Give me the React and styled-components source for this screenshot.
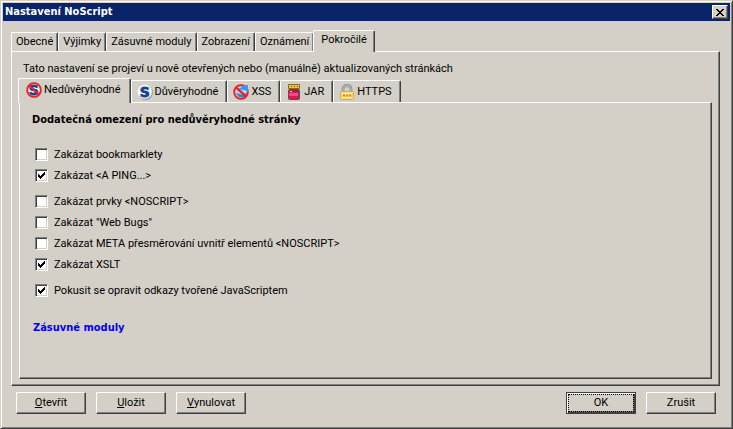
import { useState } from "react";
import styled, { createGlobalStyle, css } from "styled-components";

const GlobalStyle = createGlobalStyle`
  body {
    margin: 0;
    background: #d4d0c8;
    color: #000;
    font-family: Roboto, "DejaVu Sans Condensed", sans-serif;
    font-size: 11px;
    line-height: 14px;
  }

  button, input {
    font: inherit;
    color: inherit;
  }
`;

const boldFont = css`
  font-family: "DejaVu Sans Condensed", "DejaVu Sans", sans-serif;
  font-size: 11px;
  font-weight: bold;
`;

const raised = css`
  border: 1px solid;
  border-color: #fff #404040 #404040 #fff;
  box-shadow: inset -1px -1px #808080;
`;

const Dialog = styled.main`
  box-sizing: border-box;
  display: flex;
  flex-direction: column;
  min-height: 100vh;
  padding: 1px;
  border: 1px solid;
  border-color: #d4d0c8 #404040 #404040 #d4d0c8;
  box-shadow: inset 1px 1px #fff, inset -1px -1px #808080;
`;

const TitleBar = styled.header`
  display: flex;
  align-items: center;
  justify-content: space-between;
  height: 18px;
  margin: 1px 1px 0 1px;
  padding: 0 2px;
  background: #0a246a;
  color: #fff;
`;

const Title = styled.h1`
  ${boldFont}
  margin: 0;
`;

const CloseButton = styled.button`
  ${raised}
  display: flex;
  align-items: center;
  justify-content: center;
  width: 16px;
  height: 14px;
  padding: 0;
  background: #d4d0c8;
`;

const Body = styled.div`
  display: flex;
  flex: 1;
  flex-direction: column;
  padding: 9px 11px 13px 9px;
`;

const TabList = styled.div`
  display: flex;
  align-items: flex-end;
`;

const Tab = styled.button`
  display: flex;
  align-items: center;
  gap: 2px;
  height: ${props => props.$tall ? "22px" : "19px"};
  padding: ${props => props.$tall ? "0 8px 0 5px" : "0 4px"};
  border: solid #fff;
  border-width: 1px 1px 0 1px;
  border-right-color: #404040;
  border-radius: 2px 2px 0 0;
  box-shadow: inset -1px 0 #808080;
  background: #d4d0c8;
  white-space: nowrap;

  ${props => props.$active && css`
    position: relative;
    z-index: 1;
    height: ${props.$tall ? "25px" : "22px"};
    margin: 0 0 -1px -1px;
    padding: 0 ${props.$tall ? "9px" : "7px"} 3px 7px;
  `}
`;

const Panel = styled.section`
  ${raised}
  display: flex;
  flex: 1;
  flex-direction: column;
  padding: ${props => props.$inner ? "9px 12px" : "10px 7px 6px"};
`;

const Note = styled.p`
  margin: 0 0 2px 4px;
`;

const Heading = styled.h2`
  ${boldFont}
  margin: 0 0 18px;
  line-height: 16px;
`;

const Options = styled.div`
  display: flex;
  flex-direction: column;
  gap: 12px;
  padding-left: 3px;
`;

const OptionGroup = styled.div`
  display: flex;
  flex-direction: column;
  align-items: flex-start;
  gap: 7px;
`;

const Option = styled.label`
  display: grid;
  grid-template-columns: 13px auto;
  align-items: center;
  column-gap: 6px;
  height: 14px;

  svg {
    display: none;
    grid-area: 1 / 1;
    justify-self: center;
    pointer-events: none;
  }

  input:checked + svg {
    display: block;
  }
`;

const OptionText = styled.span`
  padding-top: 2px;
`;

const CheckBox = styled.input`
  appearance: none;
  grid-area: 1 / 1;
  box-sizing: border-box;
  width: 13px;
  height: 13px;
  margin: 0;
  border: 1px solid;
  border-color: #808080 #fff #fff #808080;
  box-shadow: inset 1px 1px #404040, inset -1px -1px #d4d0c8;
  background: #fff;
`;

const PluginsLink = styled.a`
  ${boldFont}
  align-self: flex-start;
  margin: 25px 0 0 1px;
  color: #00f;
  text-decoration: none;
`;

const Footer = styled.footer`
  display: flex;
  gap: 10px;
  padding: 6px 4px 0 5px;
`;

const Spacer = styled.div`
  flex: 1;
`;

const PushButton = styled.button`
  ${raised}
  box-sizing: border-box;
  width: 70px;
  height: 22px;
  padding: 0;
  background: #d4d0c8;

  ${props => props.$default && css`
    border-color: #404040;
    box-shadow: inset 1px 1px #fff, inset -1px -1px #404040, inset -2px -2px #808080;
    outline: 1px dotted #000;
    outline-offset: -3px;
  `}
`;

function CheckMark() {
  return (
    <svg width="7" height="7" shapeRendering="crispEdges" aria-hidden="true">
      <path d="M0 2h1v1h1v1h1v-1h1v-1h1v-1h1v-1h1v3h-1v1h-1v1h-1v1h-1v1h-1v-1h-1v-1h-1z" />
    </svg>
  );
}

function CloseIcon() {
  return (
    <svg width="8" height="7" shapeRendering="crispEdges" aria-hidden="true">
      <path d="M0 0h2v1h1v1h2v-1h1v-1h2v1h-1v1h-1v1h-1v1h1v1h1v1h1v1h-2v-1h-1v-1h-2v1h-1v1h-2v-1h1v-1h1v-1h1v-1h-1v-1h-1v-1h-1z" />
    </svg>
  );
}

function ScriptIcon({ blocked }) {
  return (
    <svg width="16" height="16" aria-hidden="true">
      <circle cx="8.5" cy="8.5" r="7.4" fill="#8b8f98" />
      <circle cx="7.7" cy="7.7" r="7.3" fill="#f8fafd" stroke="#c9ced8" strokeWidth=".5" />
      <text x="7.8" y="13" textAnchor="middle" fill="#12448c" stroke="#12448c" strokeWidth=".8" fontFamily="DejaVu Sans" fontSize="14" fontWeight="bold">S</text>
      {blocked && <Forbidden />}
    </svg>
  );
}

function Forbidden() {
  return (
    <g fill="none" stroke="#e3262c" strokeWidth="2">
      <circle cx="8" cy="8" r="7" stroke="#f09a98" />
      <circle cx="8" cy="8" r="6.8" strokeWidth="1.8" />
      <path d="M3 3.5l10 9" />
    </g>
  );
}

function XssIcon() {
  return (
    <svg width="16" height="16" aria-hidden="true">
      <circle cx="8" cy="8" r="6.5" fill="#b4d4f2" />
      <path d="M3 9l4 1q3 2 6-1l2 1-4 4-5-1z" fill="#3a7fc4" />
      <Forbidden />
      <path d="M6 4.5q1-1 3-1l-1-1.500 7-1v7l-2-1.500q-3-1-5-.500z" fill="#3d97e8" />
      <path d="M5 5l8 7.500" stroke="#e3262c" strokeWidth="2" />
    </svg>
  );
}

function JarIcon() {
  return (
    <svg width="16" height="16" aria-hidden="true">
      <rect x="2" y="5" width="12" height="11" rx="2" fill="#68484c" />
      <rect x="3" y="6" width="9" height="9" rx="1" fill="#dc1850" />
      <path d="M3 9h9v3h-9z" fill="#f24c7c" />
      <path d="M3 6h9v2h-9z" fill="#9c2038" />
      <path d="M4 7h2v1h-2z" fill="#f6cdd4" />
      <rect x="2" y="0" width="12" height="5" rx="1" fill="#8a6b10" />
      <rect x="3" y="1" width="10" height="3" fill="#e8c838" />
      <path d="M5 2.5h1M8 2.5h1M11 2.5h1" stroke="#6c5210" />
    </svg>
  );
}

function LockIcon() {
  return (
    <svg width="16" height="16" aria-hidden="true">
      <path d="M4 8V5.5Q4 1.500 8 1.500T12 5.500V8" fill="none" stroke="#929292" strokeWidth="2.8" />
      <path d="M4 8V5.500Q4 1.500 8 1.500T12 5.500V8" fill="none" stroke="#c4c4c4" />
      <rect x="1.5" y="7.5" width="13" height="8" rx="1" fill="#fbd678" stroke="#eca534" />
      <path d="M3 9.5h10M3 13.5h10" stroke="#fff0b8" />
      <path d="M4 11.5h2M7 11.5h2M10 11.5h2" stroke="#c48a30" strokeWidth="2" />
    </svg>
  );
}

const mainTabs = ["Obecné", "Výjimky", "Zásuvné moduly", "Zobrazení", "Oznámení", "Pokročilé"];

const advancedTabs = [
  { label: "Nedůvěryhodné", icon: <ScriptIcon blocked /> },
  { label: "Důvěryhodné", icon: <ScriptIcon /> },
  { label: "XSS", icon: <XssIcon /> },
  { label: "JAR", icon: <JarIcon /> },
  { label: "HTTPS", icon: <LockIcon /> }
];

const optionGroups = [
  [
    { label: "Zakázat bookmarklety" },
    { label: "Zakázat <A PING...>", checked: true }
  ],
  [
    { label: "Zakázat prvky <NOSCRIPT>" },
    { label: "Zakázat \"Web Bugs\"" },
    { label: "Zakázat META přesměrování uvnitř elementů <NOSCRIPT>" },
    { label: "Zakázat XSLT", checked: true }
  ],
  [
    { label: "Pokusit se opravit odkazy tvořené JavaScriptem", checked: true }
  ]
];

export default function App() {
  const [mainTab, setMainTab] = useState("Pokročilé");
  const [advancedTab, setAdvancedTab] = useState("Nedůvěryhodné");

  return (
    <Dialog>
      <GlobalStyle />
      <TitleBar>
        <Title>Nastavení NoScript</Title>
        <CloseButton aria-label="Zavřít"><CloseIcon /></CloseButton>
      </TitleBar>
      <Body>
        <TabList role="tablist">
          {mainTabs.map(label => (
            <Tab
              key={label}
              role="tab"
              aria-selected={mainTab === label}
              $active={mainTab === label}
              onClick={() => setMainTab(label)}
            >
              {label}
            </Tab>
          ))}
        </TabList>
        <Panel>
          <Note>Tato nastavení se projeví u nově otevřených nebo (manuálně) aktualizovaných stránkách</Note>
          <TabList role="tablist">
            {advancedTabs.map(({ label, icon }) => (
              <Tab
                key={label}
                role="tab"
                aria-selected={advancedTab === label}
                $tall
                $active={advancedTab === label}
                onClick={() => setAdvancedTab(label)}
              >
                {icon}
                {label}
              </Tab>
            ))}
          </TabList>
          <Panel $inner>
            <Heading>Dodatečná omezení pro nedůvěryhodné stránky</Heading>
            <Options>
              {optionGroups.map((group, i) => (
                <OptionGroup key={i}>
                  {group.map(({ label, checked }) => (
                    <Option key={label}>
                      <CheckBox type="checkbox" defaultChecked={checked} />
                      <CheckMark />
                      <OptionText>{label}</OptionText>
                    </Option>
                  ))}
                </OptionGroup>
              ))}
            </Options>
            <PluginsLink href="#plugins">Zásuvné moduly</PluginsLink>
          </Panel>
        </Panel>
        <Footer>
          <PushButton><u>O</u>tevřít</PushButton>
          <PushButton><u>U</u>ložit</PushButton>
          <PushButton><u>V</u>ynulovat</PushButton>
          <Spacer />
          <PushButton $default>OK</PushButton>
          <PushButton>Zrušit</PushButton>
        </Footer>
      </Body>
    </Dialog>
  );
}
